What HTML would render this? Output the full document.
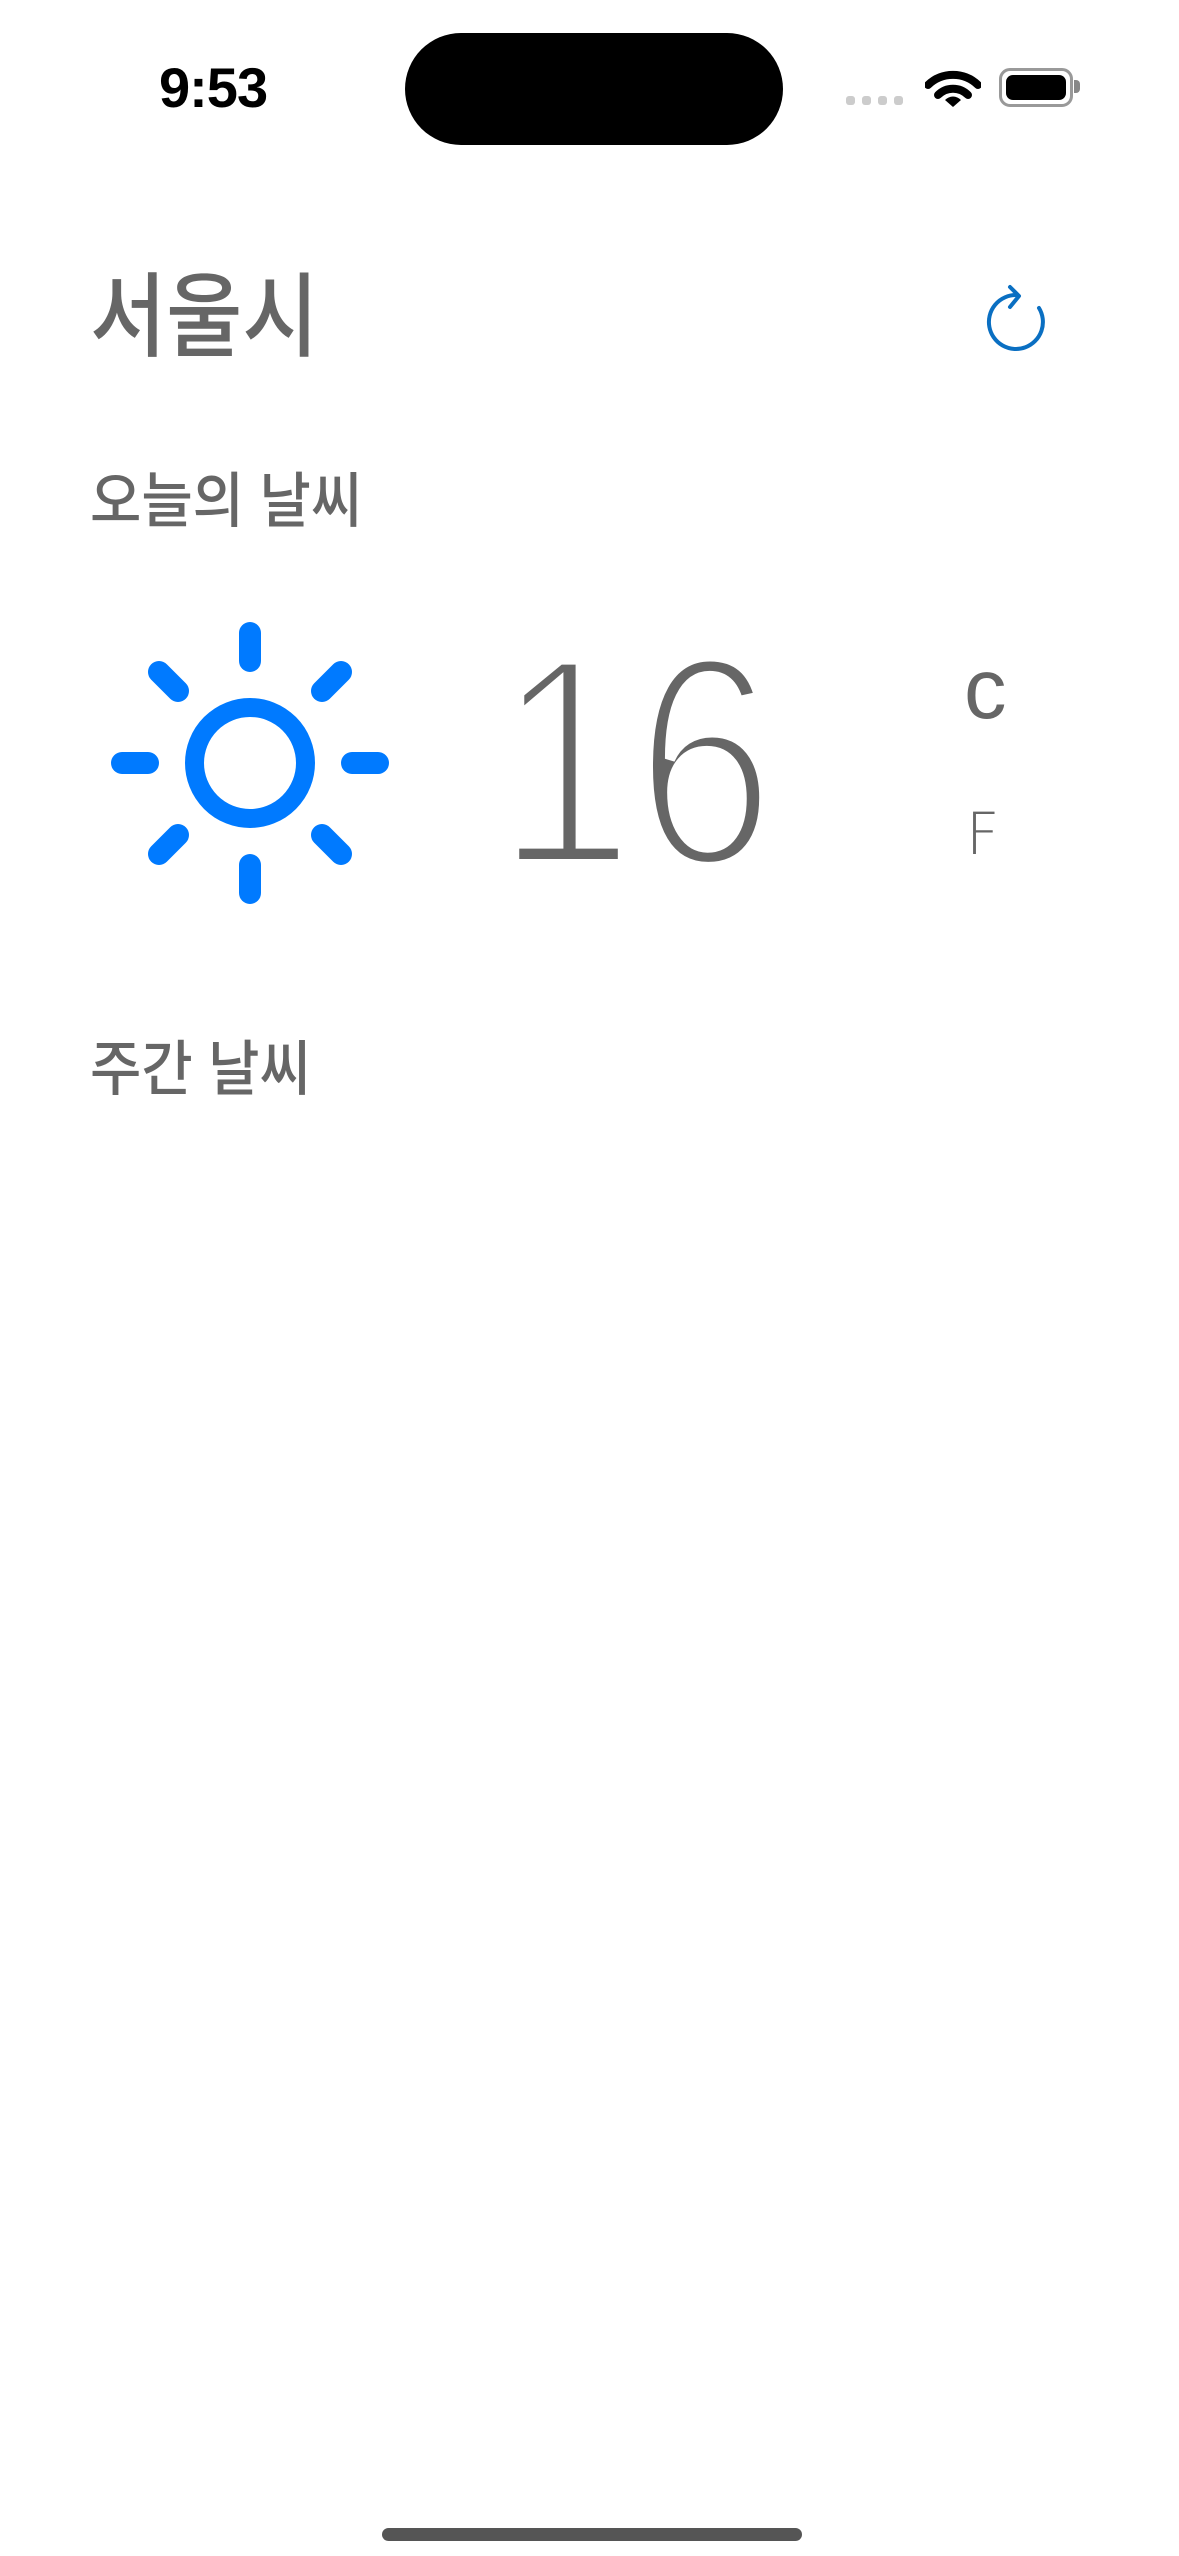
<!DOCTYPE html>
<html><head><meta charset="utf-8"><style>
html,body{margin:0;padding:0;background:#fff;}
body{width:1179px;height:2556px;position:relative;overflow:hidden;font-family:"Liberation Sans","Noto Sans CJK KR",sans-serif;}
.abs{position:absolute;}
.kr{font-family:"Liberation Sans","Noto Sans CJK KR",sans-serif;color:#666;white-space:nowrap;transform-origin:0 0;line-height:1;}
</style></head><body>
<div class="abs" style="left:159px;top:60px;font-size:56px;font-weight:bold;color:#000;letter-spacing:-1px;line-height:1;">9:53</div>
<div class="abs" style="left:405px;top:33px;width:378px;height:112px;border-radius:56px;background:#000;"></div>
<div class="abs" style="left:846px;top:96px;width:9px;height:9px;border-radius:3px;background:#ccc;"></div>
<div class="abs" style="left:862px;top:96px;width:9px;height:9px;border-radius:3px;background:#ccc;"></div>
<div class="abs" style="left:878px;top:96px;width:9px;height:9px;border-radius:3px;background:#ccc;"></div>
<div class="abs" style="left:894px;top:96px;width:9px;height:9px;border-radius:3px;background:#ccc;"></div>
<svg class="abs" style="left:925px;top:66px" width="56" height="42" viewBox="0 0 56 42">
<path d="M3 19 A36 36 0 0 1 53 19" fill="none" stroke="#000" stroke-width="8" stroke-linecap="round"/>
<path d="M13 29 A21 21 0 0 1 43 29" fill="none" stroke="#000" stroke-width="8" stroke-linecap="round"/>
<path d="M20 34 L28 41 L36 34 A11 11 0 0 0 20 34Z" fill="#000"/>
</svg>
<div class="abs" style="left:999px;top:68px;width:68px;height:33px;border:3px solid #999;border-radius:11px;"></div>
<div class="abs" style="left:1006px;top:75px;width:60px;height:25px;background:#000;border-radius:7px;"></div>
<div class="abs" style="left:1074px;top:80px;width:6px;height:13px;background:#888;border-radius:0 4px 4px 0;"></div>

<div class="abs kr" style="left:90px;top:272px;font-size:92px;font-weight:500;transform:scaleX(0.9);">서울시</div>
<svg class="abs" style="left:980px;top:282px" width="80" height="80" viewBox="0 0 80 80">
<path d="M36 13 A27 27 0 1 0 59 26" fill="none" stroke="#0a6fc2" stroke-width="4" stroke-linecap="round"/>
<path d="M30 5 L39 14 L30 25" fill="none" stroke="#0a6fc2" stroke-width="4" stroke-linecap="round" stroke-linejoin="round"/>
</svg>

<div class="abs kr" style="left:90px;top:472px;font-size:60px;font-weight:500;transform:scaleX(0.93);">오늘의 날씨</div>

<svg class="abs" style="left:100px;top:613px" width="300" height="300" viewBox="0 0 300 300">
<g transform="translate(150,150)" stroke="#007aff" stroke-linecap="round" fill="none">
<circle r="55.5" stroke-width="19"/>
<g stroke-width="22">
<line x1="0" y1="-102" x2="0" y2="-130"/>
<line x1="0" y1="102" x2="0" y2="130"/>
<line x1="-102" y1="0" x2="-128" y2="0"/>
<line x1="102" y1="0" x2="128" y2="0"/>
<line x1="72" y1="-72" x2="91" y2="-91"/>
<line x1="-72" y1="-72" x2="-91" y2="-91"/>
<line x1="72" y1="72" x2="91" y2="91"/>
<line x1="-72" y1="72" x2="-91" y2="91"/>
</g></g></svg>

<div class="abs" style="left:495px;top:611px;font-family:'Liberation Sans',sans-serif;font-size:300px;color:#666;line-height:1;transform:scaleX(0.84);transform-origin:0 0;-webkit-text-stroke:12px #fff;">16</div>
<div class="abs" style="left:964px;top:647px;font-size:85px;color:#666;line-height:1;">c</div>
<div class="abs" style="left:966px;top:805px;font-family:'DejaVu Sans','Liberation Sans',sans-serif;font-weight:200;font-size:58px;color:#666;line-height:1;">F</div>

<div class="abs kr" style="left:90px;top:1040px;font-size:60px;font-weight:500;transform:scaleX(0.93);">주간 날씨</div>

<div class="abs" style="left:382px;top:2528px;width:420px;height:13px;border-radius:7px;background:#555;"></div>
</body></html>
